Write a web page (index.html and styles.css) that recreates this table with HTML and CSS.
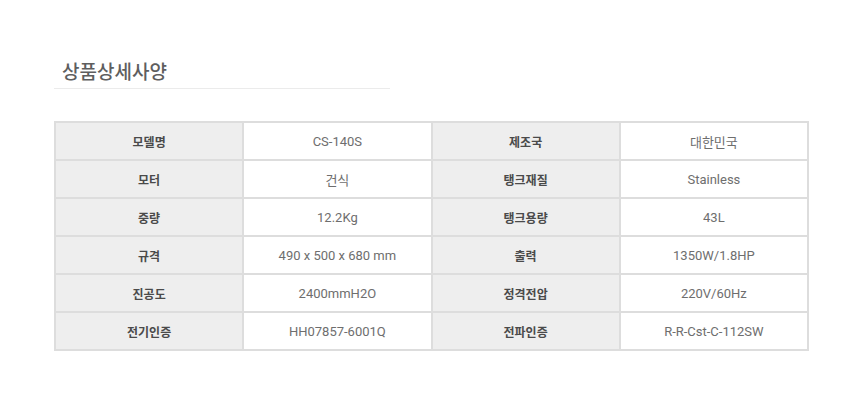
FILE: index.html
```html
<!DOCTYPE html>
<html lang="ko">
<head>
<meta charset="utf-8">
<link rel="stylesheet" href="styles.css">
</head>
<body>
<div class="wrap">
  <h2 class="title">상품상세사양</h2>
  <table class="spec">
    <tr><th>모델명</th><td>CS-140S</td><th>제조국</th><td>대한민국</td></tr>
    <tr><th>모터</th><td>건식</td><th>탱크재질</th><td>Stainless</td></tr>
    <tr><th>중량</th><td>12.2Kg</td><th>탱크용량</th><td>43L</td></tr>
    <tr><th>규격</th><td>490 x 500 x 680 mm</td><th>출력</th><td>1350W/1.8HP</td></tr>
    <tr><th>진공도</th><td>2400mmH2O</td><th>정격전압</th><td>220V/60Hz</td></tr>
    <tr><th>전기인증</th><td>HH07857-6001Q</td><th>전파인증</th><td>R-R-Cst-C-112SW</td></tr>
  </table>
</div>
</body>
</html>
```

FILE: styles.css
```css
html, body { margin: 0; padding: 0; background: #fff; }
body { font-family: "Roboto", "Noto Sans CJK KR", sans-serif; }
.wrap { padding: 61px 0 0 54px; width: 755px; }
.title {
  margin: 0;
  width: 336px;
  padding: 0 0 3px 8px;
  box-sizing: border-box;
  font-size: 19px;
  font-weight: 500;
  line-height: 24px;
  color: #5e5e5e;
  border-bottom: 1px solid #ebebeb;
}
.spec {
  margin-top: 32px;
  width: 755px;
  border-collapse: collapse;
  table-layout: fixed;
  font-size: 13px;
}
.spec th, .spec td {
  border: 2px solid #dddddd;
  height: 36px;
  padding: 0;
  text-align: center;
  vertical-align: middle;
}
.spec th {
  background: #eeeeee;
  color: #4a4a4a;
  font-weight: 700;
  font-size: 12px;
  font-family: "Noto Sans CJK KR", sans-serif;
}
.spec td {
  background: #fff;
  color: #6e6e6e;
}
```
